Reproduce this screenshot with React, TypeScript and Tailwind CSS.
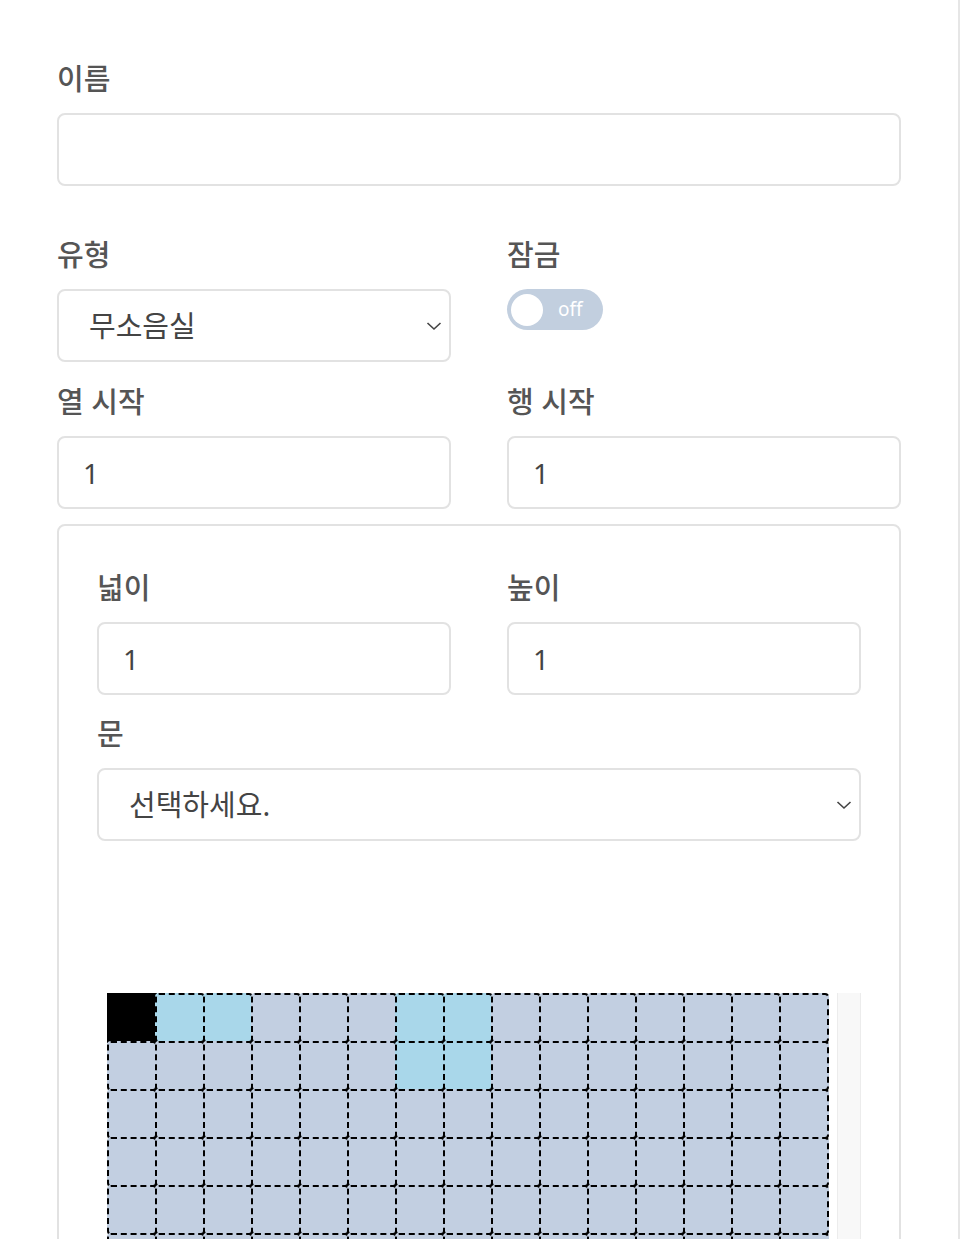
import React from "react";

const FONT = { fontFamily: '"Noto Sans", "Noto Sans CJK KR", sans-serif' };

const COLS = 15;
const ROWS = 8;
const BLUE = new Set(["0-1", "0-2", "0-6", "0-7", "1-6", "1-7"]);

function Label({ children }: { children: React.ReactNode }) {
  return (
    <div className="mb-[15px] h-[42px] text-[29px] leading-[46px] font-medium text-[#555]">
      {children}
    </div>
  );
}

function TextBox({ value = "" }: { value?: string }) {
  return (
    <div className="flex h-[73px] items-center rounded-[8px] border-2 border-[#e2e2e2] bg-white pl-[24px] text-[28px] text-[#444]">
      {value}
    </div>
  );
}

function SelectBox({ value }: { value: string }) {
  return (
    <div className="flex h-[73px] items-center justify-between rounded-[8px] border-2 border-[#e2e2e2] bg-white pl-[30px] pr-[7px] text-[29px] text-[#444]">
      <span>{value}</span>
      <svg width="16" height="10" viewBox="0 0 16 10" fill="none">
        <path d="M1.5 2 L8 8 L14.5 2" stroke="#444" strokeWidth="1.6" />
      </svg>
    </div>
  );
}

function Toggle() {
  return (
    <div className="flex h-[41px] w-[96px] items-center rounded-full bg-[#c2cfdf] pl-[4px]">
      <div className="h-[32px] w-[32px] rounded-full bg-white" />
      <span className="ml-[15px] text-[19px] leading-none text-white">off</span>
    </div>
  );
}

function Grid() {
  const cells = [];
  for (let r = 0; r < ROWS; r++) {
    for (let c = 0; c < COLS; c++) {
      const key = `${r}-${c}`;
      let cls = "bg-[#c2cfe1] border-2 border-dashed border-black rounded-[4px]";
      if (r === 0 && c === 0) cls = "bg-black";
      else if (BLUE.has(key)) cls = "bg-[#a9d7ea] border-2 border-dashed border-black rounded-[4px]";
      cells.push(<div key={key} className={`h-[50px] w-[50px] ${cls}`} />);
    }
  }
  return <div className="grid grid-cols-[repeat(15,48px)] grid-rows-[repeat(8,48px)]">{cells}</div>;
}

export default function App() {
  return (
    <div
      className="min-h-[1239px] w-[960px] border-r-2 border-[#e6e6e6] bg-white px-[57px] pt-[56px]"
      style={FONT}
    >
      <div className="mb-[46px]">
        <Label>이름</Label>
        <TextBox />
      </div>

      <div className="mb-[17px] grid grid-cols-2 gap-x-[56px]">
        <div>
          <Label>유형</Label>
          <SelectBox value="무소음실" />
        </div>
        <div>
          <Label>잠금</Label>
          <Toggle />
        </div>
      </div>

      <div className="mb-[15px] grid grid-cols-2 gap-x-[56px]">
        <div>
          <Label>열 시작</Label>
          <TextBox value="1" />
        </div>
        <div>
          <Label>행 시작</Label>
          <TextBox value="1" />
        </div>
      </div>

      <div className="rounded-[8px] border-2 border-[#e2e2e2] px-[38px] pt-[39px] pb-[40px]">
        <div className="mb-[16px] grid grid-cols-2 gap-x-[56px]">
          <div>
            <Label>넓이</Label>
            <TextBox value="1" />
          </div>
          <div>
            <Label>높이</Label>
            <TextBox value="1" />
          </div>
        </div>

        <div>
          <Label>문</Label>
          <SelectBox value="선택하세요." />
        </div>

        <div className="mt-[152px] flex justify-between pl-[10px]">
          <Grid />
          <div className="w-[24px] border-x border-[#ececec] bg-[#f8f8f8]" />
        </div>
      </div>
    </div>
  );
}
